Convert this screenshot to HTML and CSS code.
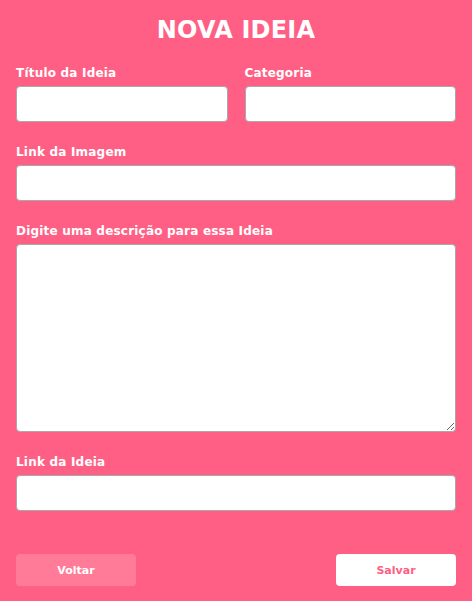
FILE: index.html
```html
<!DOCTYPE html>
<html lang="pt">
<head>
<meta charset="utf-8">
<title>Nova Ideia</title>
<link rel="stylesheet" href="styles.css">
</head>
<body>
<form class="form">
  <h1 class="title">NOVA IDEIA</h1>
  <div class="row">
    <label class="field">
      <span class="label">Título da Ideia</span>
      <input class="input" type="text">
    </label>
    <label class="field">
      <span class="label">Categoria</span>
      <input class="input" type="text">
    </label>
  </div>
  <label class="field">
    <span class="label">Link da Imagem</span>
    <input class="input" type="text">
  </label>
  <label class="field">
    <span class="label">Digite uma descrição para essa Ideia</span>
    <textarea class="input textarea"></textarea>
  </label>
  <label class="field">
    <span class="label">Link da Ideia</span>
    <input class="input" type="text">
  </label>
  <div class="actions">
    <button type="button" class="btn btn-back">Voltar</button>
    <button type="button" class="btn btn-save">Salvar</button>
  </div>
</form>
</body>
</html>
```
FILE: styles.css
```css
html, body {
  margin: 0;
  padding: 0;
  background: #ff5f84;
  font-family: "DejaVu Sans", "Open Sans", sans-serif;
  color: #fff;
}
.form {
  display: flex;
  flex-direction: column;
  gap: 22px;
  padding: 12px 16px 0;
  box-sizing: border-box;
  width: 472px;
}
.title {
  margin: 2px 0 -3px;
  font-size: 24px;
  line-height: 32px;
  font-weight: 700;
  text-align: center;
  letter-spacing: 0.2px;
}
.row {
  display: grid;
  grid-template-columns: 1fr 1fr;
  column-gap: 17px;
}
.field {
  display: flex;
  flex-direction: column;
  gap: 5px;
}
.label {
  font-size: 12px;
  line-height: 16px;
  font-weight: 700;
  letter-spacing: 0.2px;
}
.input {
  display: block;
  box-sizing: border-box;
  width: 100%;
  height: 36px;
  margin: 0;
  border: 1px solid #a8a8a8;
  border-radius: 4px;
  background: #fff;
  padding: 4px 8px;
  font: inherit;
  outline: none;
}
.textarea {
  height: 188px;
  resize: vertical;
}
.actions {
  display: flex;
  justify-content: space-between;
  margin-top: 21px;
}
.btn {
  width: 120px;
  height: 32px;
  border: none;
  border-radius: 4px;
  font-family: "DejaVu Sans", sans-serif;
  font-size: 11px;
  font-weight: 700;
  cursor: pointer;
}
.btn-back {
  background: #ff7b97;
  color: #fff;
}
.btn-save {
  background: #fff;
  color: #ff5f84;
}
```
